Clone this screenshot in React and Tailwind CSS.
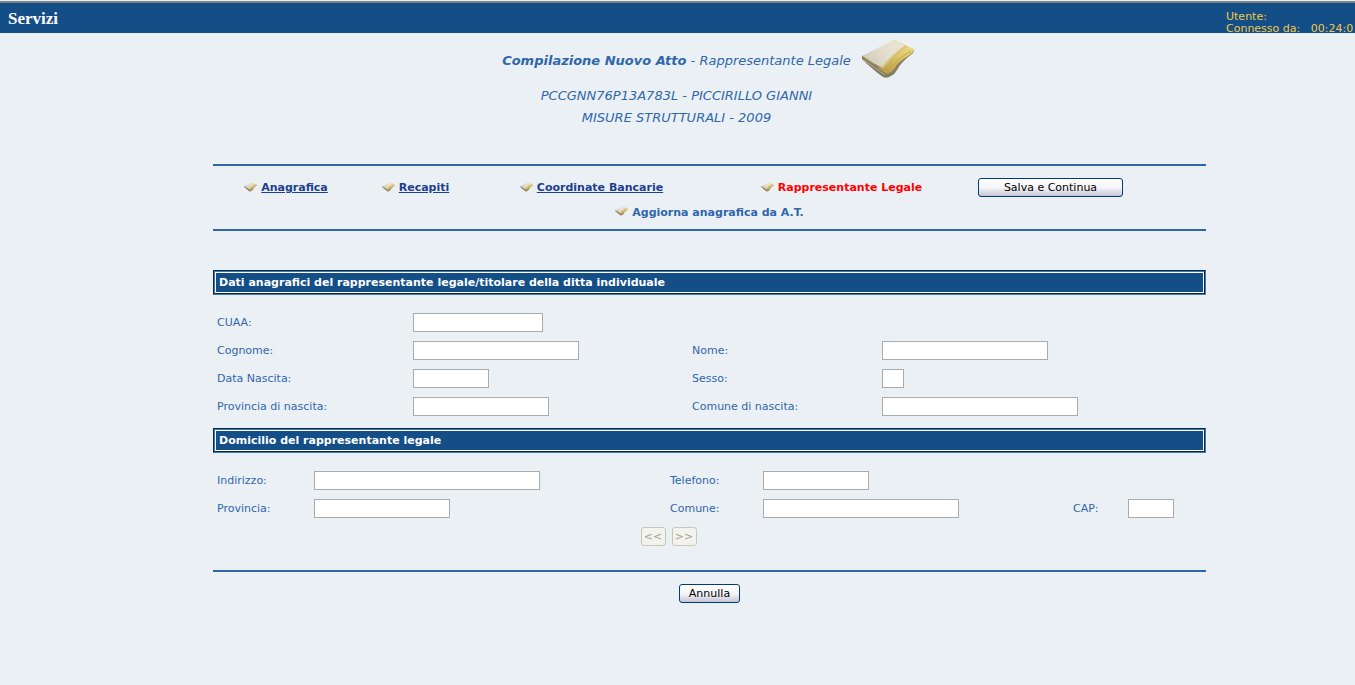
import React from 'react';

const navItems = [
    {label: "Anagrafica", href: "#anagrafica"},
    {label: "Recapiti", href: "#recapiti"},
    {label: "Coordinate Bancarie", href: "#coordinate"},
    {label: "Rappresentante Legale", active: true}
];

const datiFields = [
    {id: "cuaa", label: "CUAA:", width: "w-[130px]", wide: true},
    {id: "cognome", label: "Cognome:", width: "w-[166px]"},
    {id: "nome", label: "Nome:", width: "w-[166px]"},
    {id: "dataNascita", label: "Data Nascita:", width: "w-[76px]"},
    {id: "sesso", label: "Sesso:", width: "w-[22px]"},
    {id: "provinciaNascita", label: "Provincia di nascita:", width: "w-[136px]"},
    {id: "comuneNascita", label: "Comune di nascita:", width: "w-[196px]"}
];

const domicilioFields = [
    {id: "indirizzo", label: "Indirizzo:", width: "w-[226px]"},
    {id: "telefono", label: "Telefono:", width: "w-[106px]", wide: true},
    {id: "provincia", label: "Provincia:", width: "w-[136px]"},
    {id: "comune", label: "Comune:", width: "w-[196px]"},
    {id: "cap", label: "CAP:", width: "w-[46px]"}
];

function BookIcon({className}) {
    return (
        <svg className={className} viewBox="0 0 54 40" aria-hidden="true">
            <defs>
                <linearGradient id="cover" x1="0" y1="0.7" x2="1" y2="0.2">
                    <stop offset="0" stopColor="#cfc9b6"/>
                    <stop offset="0.5" stopColor="#e3ddd0"/>
                    <stop offset="1" stopColor="#ebe6d2"/>
                </linearGradient>
                <linearGradient id="gold" x1="1" y1="0" x2="0.2" y2="1">
                    <stop offset="0" stopColor="#efe09a"/>
                    <stop offset="0.5" stopColor="#dfc566"/>
                    <stop offset="1" stopColor="#b79a48"/>
                </linearGradient>
            </defs>
            <path d="M1 17 L1 20 Q12 31 22 38 Q26 40 30 37 Q34 35 36 31 Q39 24 52 14 L53 11 Z" fill="#857c62"/>
            <path d="M33 1 Q43 5 53 10 Q53 13 47 17 Q39 22 35 27 Q32 33 26 35 L17 29 Z" fill="url(#gold)"/>
            <path d="M50 12 Q38 19 33 26 Q30 31 24 33" fill="none" stroke="#c3a54c" strokeWidth="1"/>
            <path d="M1 17 Q17 9 32 1 L45 7 Q33 16 21 29 Q11 24 1 17 Z" fill="url(#cover)"/>
            <path d="M45 7 Q32 16 21 29" fill="none" stroke="#d8c176" strokeWidth="2"/>
            <path d="M1 17 Q12 25 21 29" fill="none" stroke="#b98e62" strokeWidth="1"/>
            <path d="M3 21 Q14 29 24 36" fill="none" stroke="#b3ab93" strokeWidth="1"/>
        </svg>
    )
}

function SectionTitle({children}) {
    return (
        <div className="border border-t-[#0f2538] border-l-[#0f2538] border-b-[#3f7eb4] border-r-[#3f7eb4]">
            <div className="border border-t-[#3f7eb4] border-l-[#3f7eb4] border-b-[#0f2538] border-r-[#0f2538]">
                <h2 className="h-[21px] border border-white bg-[#134e87] pt-px pl-[3px] text-[11px] leading-[18px] font-bold text-white">
                    {children}
                </h2>
            </div>
        </div>
    )
}

function Field({field}) {
    return (
        <>
            <label htmlFor={field.id} className="pt-0.5">{field.label}</label>
            <div className={field.wide ? "col-span-3" : ""}>
                <input id={field.id} type="text"
                       className={`block h-[19px] border border-[#a5acb2] bg-white px-1 ${field.width}`}/>
            </div>
        </>
    )
}

function Button({className, children}) {
    return (
        <button type="button"
                className={`h-[19px] rounded-[3px] border border-[#003c74] bg-linear-to-b from-white via-[#f6f6fa] to-[#c6c5d7] text-[11px] leading-[17px] text-black ${className}`}>
            {children}
        </button>
    )
}

function PagerButton({label, children}) {
    return (
        <button type="button" disabled aria-label={label}
                className="h-[19px] w-[25px] rounded-[3px] border border-[#c9c7ba] bg-[#f3f3ee] text-[11px] leading-[17px] text-[#a1a192]">
            {children}
        </button>
    )
}

export default function App() {
    return (
        <div className="min-h-screen overflow-hidden bg-[#ebf0f5] font-['Verdana','DejaVu_Sans',sans-serif] text-[11px] text-[#2f67aa]">
            <header className="mt-px flex h-8 justify-between border-t-2 border-[#7c8184] bg-[#134e87]">
                <h1 className="pl-2 font-['Liberation_Serif',serif] text-[17px] leading-8 font-bold text-white">Servizi</h1>
                <div className="w-[129px] pt-2 leading-3 whitespace-pre text-[#f0c848]">
                    <p>Utente:</p>
                    <p>Connesso da:   00:24:0</p>
                </div>
            </header>

            <main className="pr-[149px] pl-[213px]">
                <div className="flex justify-center gap-[10px] pt-[6px] pr-0.5 text-[13px] italic">
                    <div className="text-center leading-[22px]">
                        <p className="mt-[11px] mb-[13px]">
                            <strong>Compilazione Nuovo Atto</strong> - Rappresentante Legale
                        </p>
                        <p>PCCGNN76P13A783L - PICCIRILLO GIANNI</p>
                        <p>MISURE STRUTTURALI - 2009</p>
                    </div>
                    <BookIcon className="h-10 w-[54px]"/>
                </div>

                <nav className="mt-[35px] h-[67px] border-y-2 border-[#2c68a8] pt-3 font-bold">
                    <ul className="grid grid-cols-[146fr_113fr_239fr_261fr_157fr_77fr] items-center">
                        {navItems.map((item) => (
                            <li key={item.label} className="flex items-center justify-center gap-1 pt-0.5">
                                <BookIcon className="mb-1 h-[10px] w-[13px]"/>
                                {item.active
                                    ? <span className="text-[#ff0000]">{item.label}</span>
                                    : <a href={item.href} className="text-[#1c3f8f] underline">{item.label}</a>}
                            </li>
                        ))}
                        <li className="flex justify-center font-normal">
                            <Button className="w-[145px]">Salva e Continua</Button>
                        </li>
                    </ul>
                    <p className="mt-2 flex items-center justify-center gap-1 leading-4">
                        <BookIcon className="mb-1 h-[10px] w-[13px]"/>
                        <span>Aggiorna anagrafica da A.T.</span>
                    </p>
                </nav>

                <form className="mt-[39px]">
                    <SectionTitle>Dati anagrafici del rappresentante legale/titolare della ditta individuale</SectionTitle>
                    <div className="grid grid-cols-[196fr_279fr_190fr_324fr] items-center gap-y-[9px] pt-[18px] pb-3 pl-1">
                        {datiFields.map((field) => <Field key={field.id} field={field}/>)}
                    </div>

                    <SectionTitle>Domicilio del rappresentante legale</SectionTitle>
                    <div className="grid grid-cols-[97fr_356fr_93fr_310fr_55fr_78fr] items-center gap-y-[9px] pt-[18px] pl-1">
                        {domicilioFields.map((field) => <Field key={field.id} field={field}/>)}
                    </div>

                    <div className="flex justify-center gap-[6px] pt-[9px] pr-[82px] pb-6">
                        <PagerButton label="Precedente">&lt;&lt;</PagerButton>
                        <PagerButton label="Successivo">&gt;&gt;</PagerButton>
                    </div>

                    <div className="flex justify-center border-t-2 border-[#2c68a8] pt-3">
                        <Button className="w-[61px]">Annulla</Button>
                    </div>
                </form>
            </main>
        </div>
    )
}
